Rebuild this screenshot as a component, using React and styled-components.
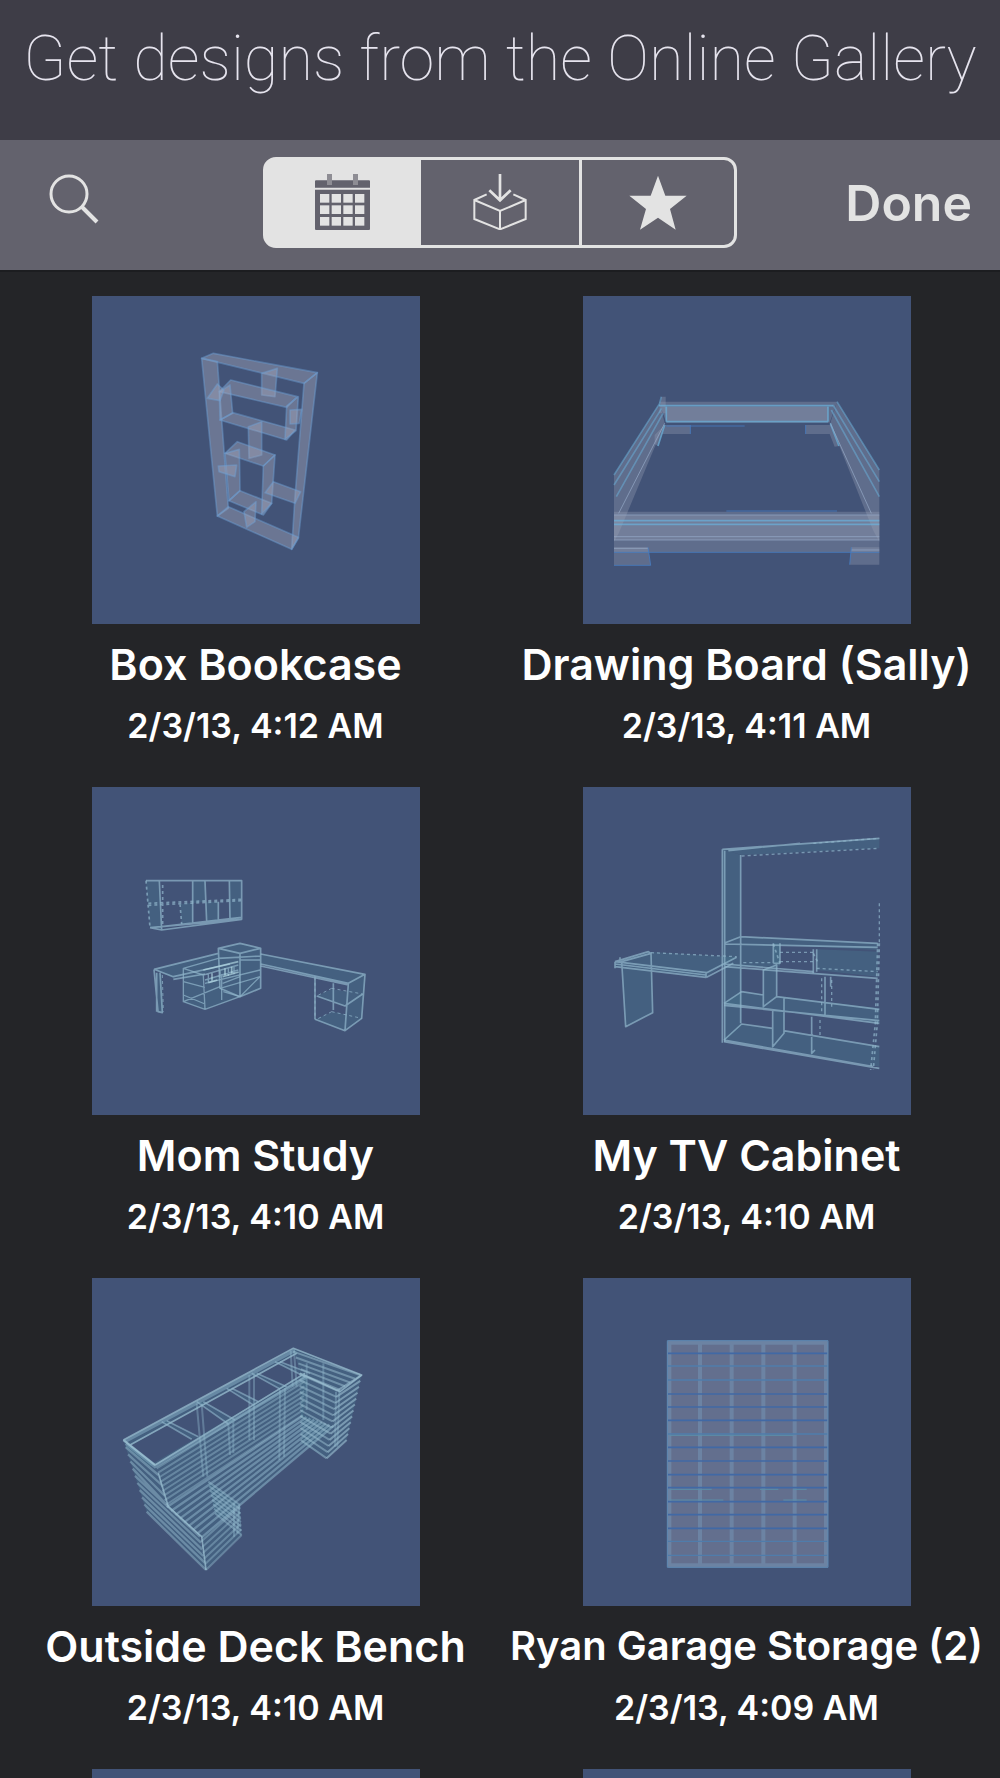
import { useState } from 'react'
import styled, { createGlobalStyle } from 'styled-components'

const GlobalStyle = createGlobalStyle`
    * {
        box-sizing: border-box;
    }
    body {
        margin: 0;
        background-color: #242528;
        font-family: Inter, "Liberation Sans", sans-serif;
        color: #ffffff;
    }
`

const Page = styled.div`
    display: flex;
    flex-direction: column;
    height: 100vh;
    overflow: hidden;
`

const Banner = styled.header`
    display: flex;
    justify-content: center;
    flex-shrink: 0;
    height: 140px;
    padding-top: 17px;
    background-color: #3e3d47;
`

const Heading = styled.h1`
    margin: 0;
    font-family: Roboto, "Liberation Sans", sans-serif;
    font-size: 63px;
    line-height: 84px;
    font-weight: 100;
    white-space: nowrap;
    color: #e6e4ee;
`

const Toolbar = styled.nav`
    display: grid;
    grid-template-columns: 1fr auto 1fr;
    align-items: center;
    flex-shrink: 0;
    height: 132px;
    padding: 0 28px 6px;
    background-color: #63626d;
    border-bottom: 2px solid #1c1d20;
`

const IconButton = styled.button`
    justify-self: start;
    display: flex;
    padding: 0 20px 4px;
    border: none;
    background: none;
    color: #e3e3e3;
`

const DoneButton = styled.button`
    justify-self: end;
    padding: 2px 0 0;
    border: none;
    background: none;
    font-family: inherit;
    font-size: 50px;
    line-height: 60px;
    font-weight: 600;
    color: #e3e3e3;
`

const Segments = styled.div`
    display: flex;
    height: 91px;
`

const Segment = styled.button`
    display: flex;
    justify-content: center;
    align-items: center;
    width: 158px;
    padding: 0;
    border: 3px solid #e3e3e3;
    border-width: 3px 0;
    background-color: ${props => props.$active ? "#e3e3e3" : "transparent"};
    color: ${props => props.$active ? "#63626d" : "#e3e3e3"};

    &:first-child {
        border-width: 3px;
        border-radius: 13px 0 0 13px;
    }
    &:last-child {
        border-width: 3px;
        border-radius: 0 13px 13px 0;
    }
`

const Gallery = styled.main`
    display: grid;
    grid-template-columns: 1fr 1fr;
    grid-auto-rows: 491px;
    flex: 1;
    min-height: 0;
    overflow: hidden;
    padding: 24px 8px 0 10px;
`

const Card = styled.article`
    display: flex;
    flex-direction: column;
    align-items: center;
`

const Thumb = styled.div`
    width: 328px;
    height: 328px;
    flex-shrink: 0;
    background-color: #425377;
`

const Title = styled.h2`
    margin: 14px 0 0;
    font-size: ${props => props.$small ? "40px" : "43px"};
    line-height: 52px;
    font-weight: 600;
    white-space: nowrap;
`

const Stamp = styled.time`
    margin-top: 18px;
    font-size: 34px;
    line-height: 36px;
    font-weight: 600;
    white-space: nowrap;
`

const Drawing = styled.svg`
    display: block;
    width: 100%;
    height: 100%;
    fill: none;
    stroke-linejoin: round;
`

const Wood = styled.path`
    fill: ${props => props.$plain ? "rgba(152, 162, 182, 0.34)" : "rgba(165, 168, 186, 0.42)"};
    stroke: ${props => props.$plain ? "none" : "rgba(108, 160, 212, 0.45)"};
    stroke-width: 5;
`

const Panel = styled.path`
    fill: rgba(74, 122, 148, 0.34);
`

const Edge = styled.path`
    stroke: ${props => props.$color || "rgba(146, 182, 204, 0.7)"};
    stroke-width: ${props => props.$width || 5};
    stroke-dasharray: ${props => props.$dashed ? "9 9" : "none"};
`

const SearchIcon = () => (
    <svg width="52" height="52" viewBox="0 0 52 52" fill="none" stroke="currentColor" aria-hidden="true">
        <circle cx="21" cy="20" r="18" strokeWidth="3" />
        <path d="M34 33L49 48" strokeWidth="4" />
    </svg>
)

const CalendarIcon = () => (
    <svg width="55" height="56" viewBox="0 0 165 168" aria-hidden="true">
        <path fill="currentColor" d="M3 19H162Q165 19 165 22V41H0V22Q0 19 3 19ZM0 47H165V165Q165 168 162 168H3Q0 168 0 165Z" />
        <path fill="#8e8d94" d="M36 0H51V33H36ZM114 0H129V33H114Z" />
        {[60, 94, 129].map(y => [15, 50, 85, 120].map(x => (
            <rect key={`${x}-${y}`} x={x} y={y} width="28" height="26" fill="#e3e3e3" />
        )))}
    </svg>
)

const BoxIcon = () => (
    <svg width="54" height="56" viewBox="0 0 162 168" fill="none" stroke="currentColor" strokeWidth="6" aria-hidden="true">
        <path d="M81 0V78M49 49L81 79L113 49" strokeWidth="8" />
        <path d="M41 61L4 78V135L81 166L158 135V78L121 61M4 78L81 111L158 78M81 111V166" />
    </svg>
)

const StarIcon = () => (
    <svg width="58" height="56" viewBox="0 0 174 168" aria-hidden="true">
        <path fill="currentColor" d="M87 5L109 65H173L123 105L140 167L87 131L33 167L51 105L1 65H65Z" />
    </svg>
)

const boards = [
    'M65 85L100 70L412 128L372 160Z',
    'M65 85L112 95L145 535L112 558Z',
    'M372 160L412 128L355 625L335 658L345 500Z',
    'M112 558L145 530L355 622L335 658Z',
    'M245 130L292 115L285 200L245 195Z',
    'M118 185L152 150L352 200L320 232Z',
    'M118 185L150 165L158 250L120 270Z',
    'M120 270L158 248L345 300L320 330Z',
    'M320 228L355 200L348 302L315 328Z',
    'M82 205L112 162L132 180L120 212Z',
    'M330 240L365 238L358 280L330 282Z',
    'M205 290L245 275L245 375L207 385Z',
    'M135 370L172 335L285 375L250 408Z',
    'M135 370L178 358L180 482L147 512Z',
    'M147 512L180 482L275 520L250 555Z',
    'M250 408L285 375L275 520L245 552Z',
    'M115 408L170 405L165 440L117 425Z',
    'M255 488L280 455L362 485L345 520Z',
    'M192 545L228 515L225 575L200 592Z',
]

const Bookcase = () => (
    <Drawing viewBox="0 0 984 984">
        <g transform="translate(264 102)">
            {boards.map(d => <Wood key={d} d={d} />)}
        </g>
    </Drawing>
)

const rails = [
    'M228 95H762L740 158H250Z',
    'M245 110H735V155H250Z',
    'M93 315L230 100L245 160L107 490L93 515Z',
    'M762 95L889 300V515L870 480L742 160Z',
    'M245 165H322V192H238L225 228L215 222V195Z',
    'M668 165H745L768 228L755 230L740 192H668Z',
    'M93 425H889V547H93Z',
    'M93 435H889V510H93Z',
    'M93 532H195L203 586H93Z',
    'M805 532H889V584H800Z',
    'M235 80H248V130H228Z',
]

const DrawingBoard = () => (
    <Drawing viewBox="0 0 984 984">
        <g transform="translate(0 222)">
            {rails.map(d => <Wood key={d} d={d} $plain />)}
            <Edge $color="rgba(105, 178, 220, 0.7)" d="M228 107H750M250 155H735M250 110V155M735 110V155M93 452H889M93 463H889M245 165L225 228M742 160L768 228" />
            <Edge $color="rgba(105, 178, 220, 0.5)" d="M93 315L230 100M93 345L236 115M100 380L240 130M762 95L889 300M750 105L889 335M745 120L889 380M235 80L228 107" />
            <Edge $width={3} $color="rgba(150, 170, 200, 0.7)" d="M107 430L245 160M865 430L742 160M93 435H889M93 510H889M93 500H889M93 535H195M805 540H889" />
            <Edge $width={3} $color="rgba(70, 125, 195, 0.8)" d="M93 547H889M430 423H762M93 586H203M322 165V192M668 165V192M250 168H485M195 532L203 586M805 532L800 584" />
        </g>
    </Drawing>
)

const MomStudy = () => (
    <Drawing viewBox="0 0 984 984">
        <g transform="translate(114 219)">
            <Panel d="M48 62H88L95 208L60 203ZM188 62H225V125L188 130ZM150 132L188 128V188L155 192ZM228 125H265V180L232 185ZM298 62L333 60V178L300 182Z" />
            <Panel d="M72 328L265 280L392 262L390 290L225 340L130 355ZM78 338L95 342L100 458L84 455ZM160 325L220 340L225 448L160 425ZM265 265L330 250L392 265V385L330 410L225 448V360L270 345Z" />
            <Panel d="M392 282L705 343L655 370L555 352L392 312ZM560 408L605 388L698 402L645 438ZM555 478L610 455L695 475L645 512ZM655 370L705 343L695 475L645 512Z" />
            <Edge d="M48 62H335V178L95 210L60 203M88 62L95 210M188 62V190M225 62L230 185M298 62L300 182M265 125V180M95 200L335 172M60 203L335 178" />
            <Edge $dashed d="M48 62L60 203M55 130L333 118M55 136L333 122M150 132L155 192M98 75V200" />
            <Edge d="M72 328L265 280M72 328L130 350L300 312M130 358L225 342M72 328L84 455L97 458L90 338M80 338V455M265 265L330 250L392 265L330 280ZM265 265L270 385L330 410L392 385V265M330 280V410M265 295L392 288M330 300L392 300" />
            <Edge d="M160 325L265 295M160 325L220 345L225 448L160 425ZM160 365L225 382M225 448L330 410M225 370L390 330M220 345L325 315M160 425L270 380M275 342V420M278 370L330 350M280 395L330 410L390 350M235 340V372M270 330V355M295 322V348M312 318V343M225 360L325 330M160 405L225 432M270 385L390 350" $width={4} />
            <Edge $color="rgba(190, 228, 236, 0.6)" d="M220 330L325 305M235 368L262 360M278 350L326 336M246 340V365M285 325V350M305 320V340" />
            <Edge d="M392 282L705 343L655 370L392 312M392 318L655 375M655 370L645 512L555 478M555 350L555 478M705 343L695 475L645 512M560 408L645 438L698 402M610 370V450" />
            <Edge $dashed $width={3} d="M555 350V478M605 385L560 408M605 455L560 478M97 345L100 455M605 385L698 402M605 455L695 475" />
        </g>
    </Drawing>
)

const TvCabinet = () => (
    <Drawing viewBox="0 0 984 984">
        <g transform="translate(51 99)">
            <Panel d="M367 88L422 105L425 615L372 665ZM367 88L838 55V85L425 105ZM372 370L422 350L833 370V390L540 375V440H372ZM650 388L833 395V440L832 470L650 450Z" />
            <Panel d="M45 425L145 395L410 412L318 470L45 440ZM65 425L153 400L158 578L77 620ZM490 450L530 435V530L490 560ZM372 550L425 515L838 565V610ZM372 660L425 612L838 680V740ZM520 568L555 535L550 640L518 680ZM520 370H540V430H520Z" />
            <Edge d="M367 88V668M374 92V665M422 105V610M367 88L838 55M385 92L600 70M372 370L422 350L833 370M372 372L833 382M372 440L833 475M372 432L640 455" />
            <Edge d="M372 550L838 610M372 556L838 602M372 550L425 515L490 525M530 530L838 568M372 660L820 740M372 665L838 745M372 660L425 612L518 625M550 632L838 680M520 370V430M540 370V430H520M490 450V560L530 530V435ZM640 388V460M650 388V455M675 470V585M518 568V680L552 640V535M635 590V700L645 690M692 470V500" />
            <Edge $dashed $width={4} d="M425 108L838 85M640 70L838 55M838 250V370M540 397H640M540 425H640M650 445L833 455M430 428H520M665 475V580M695 480V560M660 600V650M153 398L410 410" />
            <Edge $dashed d="M833 370L826 610L812 750M838 370L832 610L820 748M520 372L540 430M640 400L655 430" />
            <Edge d="M45 425L145 395L153 400L65 425L77 620L158 578L153 400M45 425L320 458L410 412M45 440L318 472V456M320 472L400 430M45 425V445M45 432L318 465M60 412V430" />
        </g>
    </Drawing>
)

const lerp = (a, b, t) => [a[0] + (b[0] - a[0]) * t, a[1] + (b[1] - a[1]) * t]

// slats between two rails, each rail a pair of end points
const slats = (from, to, count) => Array.from({ length: count }, (_, i) => {
    const t = i / (count - 1)
    return `M${lerp(...from, t).join(' ')}L${lerp(...to, t).join(' ')}`
}).join('')

const armEnds = [[165, 435], [175, 465], [185, 495], [192, 525], [205, 560], [300, 650], [303, 668], [306, 688], [310, 708], [314, 728], [318, 750]]
const armSlats = armEnds.map((end, i) => `M${lerp([70, 360], [140, 575], i / 10).join(' ')}L${end.join(' ')}`).join('')

const DeckBench = () => (
    <Drawing viewBox="0 0 984 984">
        <g transform="translate(24 126)">
            <Panel d="M70 360L580 85L595 98L95 375ZM160 430L615 160L622 190L175 460ZM70 360L165 435L205 560L300 650L318 750L140 575ZM175 460L622 190L610 290L200 560ZM200 560L610 285L700 320L305 655Z" />
            <Panel d="M580 85L785 165L740 360L680 415L605 370L600 160ZM305 655L420 555L425 645L318 750ZM325 485L420 555L425 645L345 580ZM90 375L165 430L150 440L75 380ZM185 305L200 302L295 350L275 358ZM290 245L310 245L405 300L385 312ZM380 205H395L475 245L460 255ZM455 160H470L560 200L540 207ZM525 125H540L630 160L615 170Z" />
            <Edge $width={10} $color="rgba(138, 178, 200, 0.5)" d="M76 364L585 91M165 440L618 172M78 370L168 442" />
            <Edge $color="rgba(160, 196, 214, 0.7)" d="M70 360L580 85L785 165L720 215L600 160M70 360L165 435L615 160M90 375L590 100M175 460L205 560L305 650L318 750" />
            <Edge $width={7} $color="rgba(156, 192, 210, 0.45)" d={armSlats} />
            <Edge $width={6} $color="rgba(150, 188, 208, 0.42)" d={slats([[170, 445], [197, 555]], [[615, 170], [608, 285]], 9)} />
            <Edge $width={7} $color="rgba(150, 188, 208, 0.48)" d={slats([[200, 562], [305, 652]], [[608, 288], [700, 318]], 9)} />
            <Edge $width={6} $color="rgba(156, 192, 210, 0.5)" d={slats([[598, 162], [602, 360]], [[712, 212], [680, 415]], 12)} />
            <Edge $width={6} $color="rgba(156, 192, 210, 0.6)" d={slats([[712, 212], [680, 415]], [[785, 165], [740, 360]], 12)} />
            <Edge $width={6} $color="rgba(156, 192, 210, 0.5)" d={slats([[580, 95], [610, 165]], [[780, 165], [720, 210]], 5)} />
            <Edge $width={6} $color="rgba(150, 188, 208, 0.42)" d={slats([[303, 665], [318, 750]], [[420, 560], [425, 645]], 6)} />
            <Edge $width={6} $color="rgba(150, 188, 208, 0.45)" d={slats([[325, 485], [345, 580]], [[420, 555], [425, 645]], 8)} />
            <Edge $color="rgba(146, 184, 205, 0.6)" d="M185 305L275 358M200 302L295 350M290 245L385 312M310 245L405 300M380 205L460 255M395 205L475 245M455 160L540 207M470 160L560 200M525 125L615 170M540 125L630 160" />
            <Edge $width={6} $color="rgba(146, 184, 205, 0.4)" d="M290 250L310 470M305 250L322 470M448 165V360M462 165V360M572 92L578 200M582 92L590 200M385 312L390 405M400 305L400 400M540 210L538 420M555 205L552 410M620 130V270M670 130V300M708 215L705 380M718 212L712 380M418 555L412 640M402 550V650" />
        </g>
    </Drawing>
)

const shelfLines = [100, 138, 180, 222, 261, 301, 342, 382, 423, 464, 503, 545, 584, 625, 664, 706]
const paleLines = [138, 180, 342, 664, 706]

const GarageStorage = () => (
    <Drawing viewBox="0 0 984 984">
        <g transform="translate(201 126)">
            <rect x="52" y="62" width="482" height="680" fill="#636f8e" />
            <Edge $width={12} $color="#6c83a3" d="M58 68H528V736H58ZM150 68V736M245 68V736M340 68V736M434 68V736" />
            {shelfLines.map(y => (
                <Edge key={y} d={`M54 ${y}H532`} $color={paleLines.includes(y) ? "#4f7cab" : "#4169a5"} $width={paleLines.includes(y) ? 4 : 5} />
            ))}
            <Edge $width={3} $color="#5b8fa9" d="M58 508H185M330 508H385M430 508H470M58 540H220M400 540H470M58 346H430" />
            <Edge $width={3} $color="#5d88b2" d="M52 62H534V742H52Z" />
        </g>
    </Drawing>
)

const designs = [
    { title: 'Box Bookcase', date: '2/3/13, 4:12 AM', Model: Bookcase },
    { title: 'Drawing Board (Sally)', date: '2/3/13, 4:11 AM', Model: DrawingBoard },
    { title: 'Mom Study', date: '2/3/13, 4:10 AM', Model: MomStudy },
    { title: 'My TV Cabinet', date: '2/3/13, 4:10 AM', Model: TvCabinet },
    { title: 'Outside Deck Bench', date: '2/3/13, 4:10 AM', Model: DeckBench },
    { title: 'Ryan Garage Storage (2)', date: '2/3/13, 4:09 AM', Model: GarageStorage },
]

const Design = ({ title, date, Model }) => (
    <Card>
        <Thumb><Model /></Thumb>
        <Title $small={title.length > 22}>{title}</Title>
        <Stamp>{date}</Stamp>
    </Card>
)

const tabs = [
    { name: 'Recent', Icon: CalendarIcon },
    { name: 'Downloads', Icon: BoxIcon },
    { name: 'Favorites', Icon: StarIcon },
]

const App = () => {
    const [active, setActive] = useState(0)

    return (
        <Page>
            <GlobalStyle />
            <Banner>
                <Heading>Get designs from the Online Gallery</Heading>
            </Banner>
            <Toolbar>
                <IconButton aria-label="Search"><SearchIcon /></IconButton>
                <Segments>
                    {tabs.map(({ name, Icon }, i) => (
                        <Segment key={name} aria-label={name} aria-pressed={i === active} $active={i === active} onClick={() => setActive(i)}>
                            <Icon />
                        </Segment>
                    ))}
                </Segments>
                <DoneButton>Done</DoneButton>
            </Toolbar>
            <Gallery>
                {designs.map(design => <Design key={design.title} {...design} />)}
                <Card><Thumb /></Card>
                <Card><Thumb /></Card>
            </Gallery>
        </Page>
    )
}

export default App
